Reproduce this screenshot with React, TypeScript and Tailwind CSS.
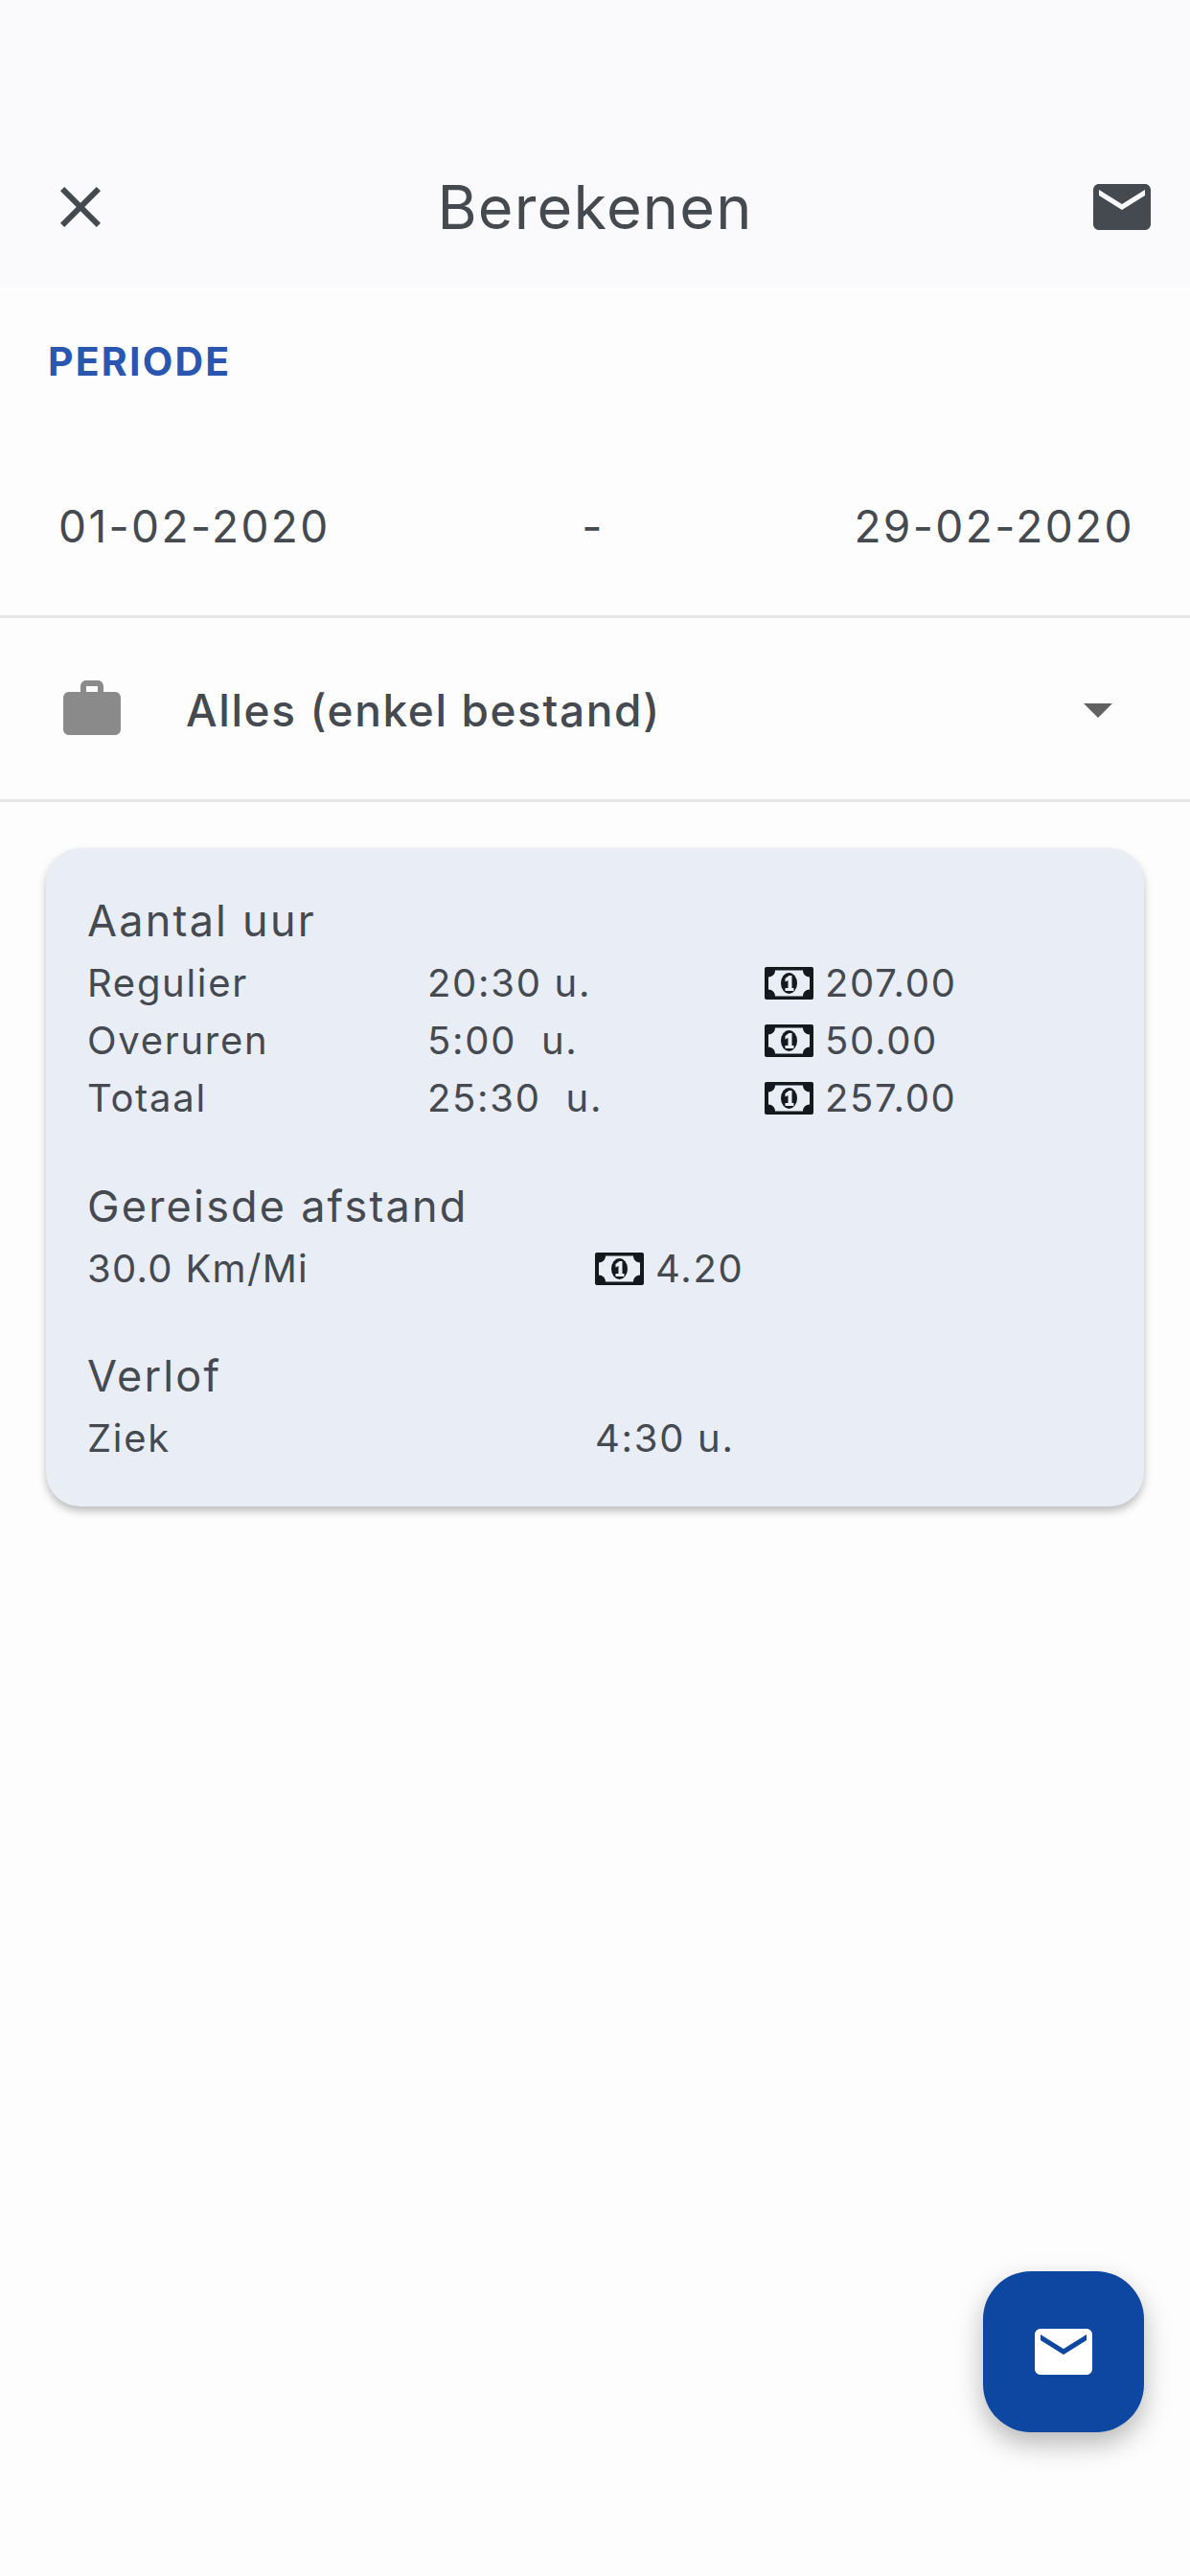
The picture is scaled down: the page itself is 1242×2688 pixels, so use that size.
import React from "react";

const CLOSE = "M19 6.41L17.59 5 12 10.59 6.41 5 5 6.41 10.59 12 5 17.59 6.41 19 12 13.41 17.59 19 19 17.59 13.41 12z";
const MAIL = "M20 4H4c-1.1 0-1.99.9-1.99 2L2 18c0 1.1.9 2 2 2h16c1.1 0 2-.9 2-2V6c0-1.1-.9-2-2-2zm0 4l-8 5-8-5V6l8 5 8-5v2z";
const WORK = "M20 6h-4V4c0-1.11-.89-2-2-2h-4c-1.11 0-2 .89-2 2v2H4c-1.11 0-1.99.89-1.99 2L2 19c0 1.11.89 2 2 2h16c1.11 0 2-.89 2-2V8c0-1.11-.89-2-2-2zm-6 0h-4V4h4v2z";
const CARET = "M7 10l5 5 5-5z";

const Icon = ({ d, className }: { d: string; className: string }) => (
  <svg viewBox="0 0 24 24" className={`w-[72px] h-[72px] shrink-0 fill-current ${className}`}>
    <path d={d} />
  </svg>
);

// banknote glyph used in front of the amounts
const Bill = () => (
  <svg viewBox="0 0 51 34" className="w-[51px] h-[34px] shrink-0">
    <rect width="51" height="34" rx="2" fill="#15181c" />
    <path
      d="M11 3.500h29c0 4 3 7 7 7v13c-4 0-7 3-7 7H11c0-4-3-7-7-7v-13c4 0 7-3 7-7z"
      fill="#e9edf5"
    />
    <ellipse cx="25.500" cy="17" rx="8.500" ry="11" fill="#15181c" />
    <path d="M21.500 12l4-3h3v13h2v3h-9v-3h3v-8l-3 1.500z" fill="#e9edf5" />
  </svg>
);

const Money = ({ value }: { value: string }) => (
  <div className="flex items-center gap-[12px]">
    <Bill />
    <span>{value}</span>
  </div>
);

const hours = [
  { label: "Regulier", time: "20:30 u.", amount: "207.00" },
  { label: "Overuren", time: "5:00\u00a0 u.", amount: "50.00" },
  { label: "Totaal", time: "25:30\u00a0 u.", amount: "257.00" },
];

export default function App() {
  return (
    <div className="relative h-[2688px] bg-[#fdfdfe] text-[#454950] font-['Inter',sans-serif]">
      {/* Header */}
      <header className="h-[300px] bg-[#fafafc] flex items-start justify-between pt-[180px] pl-[48px] pr-[35px]">
        <Icon d={CLOSE} className="text-[#454950]" />
        <h1 className="pr-[13px] text-[63px] leading-[72px] tracking-[1.200px]">Berekenen</h1>
        <Icon d={MAIL} className="text-[#454950]" />
      </header>

      {/* Periode */}
      <section className="h-[345px] border-b-[3px] border-[#e6e6e6]">
        <div className="pl-[50px] pt-[55px] text-[41px] leading-[44px] font-bold tracking-[2.200px] text-[#2a56b0]">
          PERIODE
        </div>
        <div className="flex justify-between pl-[61px] pr-[58px] mt-[122px] text-[46px] leading-[56px] tracking-[2.400px]">
          <span>01-02-2020</span>
          <span className="pl-[2px]">-</span>
          <span>29-02-2020</span>
        </div>
      </section>

      {/* Select */}
      <section className="h-[192px] border-b-[3px] border-[#e6e6e6] flex items-center pl-[60px] pr-[60px]">
        <Icon d={WORK} className="text-[#8a8a8a]" />
        <span className="ml-[62px] pt-[3px] flex-1 text-[46px] font-[450] tracking-[1.600px]">Alles (enkel bestand)</span>
        <Icon d={CARET} className="text-[#616161]" />
      </section>

      {/* Summary card */}
      <section className="mx-[48px] mt-[48px] h-[687px] rounded-[36px] bg-[#e9edf5] pl-[43px] pt-[51px] shadow-[0_5px_8px_rgba(0,0,0,0.25)] text-[40px] tracking-[1.700px]">
        <div className="text-[45px] leading-[50px] tracking-[2.200px]">Aantal uur</div>
        <div className="mt-[10px] grid grid-cols-[355px_352px_auto] leading-[60px]">
          {hours.map((row) => (
            <React.Fragment key={row.label}>
              <span>{row.label}</span>
              <span>{row.time}</span>
              <Money value={row.amount} />
            </React.Fragment>
          ))}
        </div>

        <div className="mt-[58px] text-[45px] leading-[50px] tracking-[2.200px]">Gereisde afstand</div>
        <div className="mt-[10px] grid grid-cols-[530px_auto] leading-[60px]">
          <span className="tracking-[1.300px]">30.0 Km/Mi</span>
          <Money value="4.20" />
        </div>

        <div className="mt-[57px] text-[45px] leading-[50px] tracking-[2.200px]">Verlof</div>
        <div className="mt-[10px] grid grid-cols-[530px_auto] leading-[60px]">
          <span>Ziek</span>
          <span>4:30 u.</span>
        </div>
      </section>

      {/* FAB */}
      <button
        type="button"
        className="absolute left-[1026px] top-[2370px] w-[168px] h-[168px] rounded-[50px] bg-[#0e47a1] text-white flex items-center justify-center shadow-[0_12px_28px_rgba(0,0,0,0.28)]"
      >
        <Icon d={MAIL} className="text-white" />
      </button>
    </div>
  );
}
